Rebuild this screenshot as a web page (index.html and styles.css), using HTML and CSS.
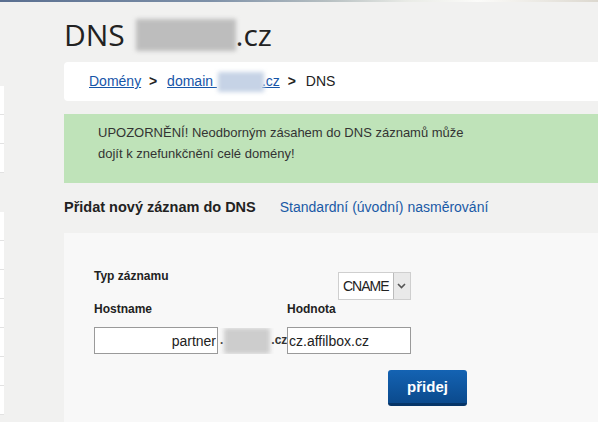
FILE: index.html
```html
<!DOCTYPE html>
<html>
  <head>
    <title>DNS</title>
    <link rel="stylesheet" href="styles.css">
  </head>
  <body>
    <div class="topbar"></div>
    <div class="page">
      <div class="side">
        <div class="cell"></div>
        <div class="cell"></div>
        <div class="cell"></div>
        <div class="side-gap"></div>
        <div class="cell"></div>
        <div class="cell"></div>
        <div class="cell"></div>
        <div class="cell"></div>
        <div class="cell"></div>
        <div class="cell"></div>
        <div class="cell"></div>
      </div>
      <div class="main">
        <h1 class="title">DNS <span class="blur blur-title"></span>.cz</h1>
        <div class="crumbs">
          <a href="#">Domény</a>
          <span class="sep">&gt;</span>
          <a href="#">domain <span class="blur blur-crumb"></span>.cz</a>
          <span class="sep">&gt;</span>
          <span>DNS</span>
        </div>
        <div class="alert">
          <p>UPOZORNĚNÍ! Neodborným zásahem do DNS záznamů může dojít k znefunkčnění celé domény!</p>
        </div>
        <div class="tabs">
          <strong>Přidat nový záznam do DNS</strong>
          <a href="#">Standardní (úvodní) nasměrování</a>
        </div>
        <div class="panel">
          <div class="row type-row">
            <label class="lbl">Typ záznamu</label>
            <div class="select">
              <span class="select-val">CNAME</span>
              <span class="select-btn">
                <svg width="9" height="6" viewBox="0 0 9 6"><path d="M1 1 L4.5 4.5 L8 1" fill="none" stroke="#555" stroke-width="1.6"/></svg>
              </span>
            </div>
          </div>
          <div class="row labels">
            <label class="lbl col1">Hostname</label>
            <label class="lbl">Hodnota</label>
          </div>
          <div class="row inputs">
            <input class="field host" type="text" value="partner">
            <span class="suffix">.<span class="blur blur-host"></span>.cz</span>
            <input class="field" type="text" value="cz.affilbox.cz">
          </div>
          <div class="row actions">
            <button class="btn">přidej</button>
          </div>
        </div>
      </div>
    </div>
  </body>
</html>
```

FILE: styles.css
```css
body {
    margin: 0;
    padding: 0;
    background: #f1f1f0;
    font-family: "Liberation Sans", Arial, sans-serif;
    color: #333;
    overflow: hidden;
}
a {
    color: #1655a8;
}
.topbar {
    height: 2px;
    background: linear-gradient(to right, #5a6f90 0%, #7d90a8 35%, #b7c0c2 55%, #e9ebe6 68%, #fbfbf9 80%, #dcd8cf 100%);
}
.page {
    display: flex;
    height: 420px;
    overflow: hidden;
}
.side {
    width: 4px;
    padding-top: 84px;
}
.side .cell {
    height: 28px;
    background: #fff;
    border-bottom: 1px solid #e2e2e2;
}
.side-gap {
    height: 39px;
}
.main {
    flex: 1;
    margin-left: 60px;
}
.title {
    margin: 0;
    height: 60px;
    line-height: 66px;
    font-family: "Open Sans", sans-serif;
    font-weight: normal;
    font-size: 30px;
    color: #222;
    white-space: nowrap;
}
.blur {
    display: inline-block;
    filter: blur(2px);
    vertical-align: middle;
}
.blur-title {
    width: 100px;
    height: 32px;
    background: #bdbdbd;
    margin: -6px 0 0 3px;
}
.blur-crumb {
    width: 46px;
    height: 20px;
    background: #c6d3e6;
    margin: 0 -2px 0 1px;
}
.blur-host {
    width: 46px;
    height: 26px;
    background: #cdcdcd;
    margin: 0 1px;
}
.crumbs {
    background: #fff;
    border-radius: 4px 0 0 4px;
    height: 39px;
    line-height: 39px;
    padding-left: 25px;
    font-size: 14px;
    color: #222;
    white-space: nowrap;
}
.crumbs .sep {
    margin: 0 6px 0 4px;
    font-weight: bold;
}
.alert {
    margin-top: 13px;
    background: #bfe3b9;
    height: 69px;
    padding: 8px 34px 0;
    box-sizing: border-box;
}
.alert p {
    margin: 0;
    width: 385px;
    font-size: 13px;
    line-height: 21px;
    color: #333;
}
.tabs {
    display: flex;
    gap: 24px;
    height: 50px;
    line-height: 48px;
    font-size: 14px;
    white-space: nowrap;
}
.tabs strong {
    color: #222;
    font-size: 14.5px;
}
.tabs a {
    text-decoration: none;
    color: #1a5aa6;
}
.panel {
    background: #f8f8f8;
    padding: 35px 0 0 30px;
    height: 200px;
    font-size: 12px;
}
.row {
    display: flex;
    align-items: flex-start;
}
.lbl {
    font-weight: bold;
    color: #222;
    font-size: 12px;
}
.type-row .lbl {
    padding-top: 1px;
    width: 244px;
}
.select {
    display: flex;
    height: 28px;
    border: 1px solid #cfcfcf;
    background: #fff;
    box-sizing: border-box;
    margin-top: 4px;
}
.select-val {
    padding: 0 4px 0 4px;
    line-height: 26px;
    font-size: 14px;
    letter-spacing: -1px;
    color: #222;
}
.select-btn {
    width: 16px;
    background: #e9e9e9;
    border-left: 1px solid #bbb;
    display: flex;
    align-items: center;
    justify-content: center;
}
.row .col1 {
    width: 193px;
}
.labels {
    margin-top: 2px;
}
.inputs {
    margin-top: 11px;
    align-items: center;
}
.field {
    width: 124px;
    height: 27px;
    box-sizing: border-box;
    border: 1px solid #9a9a9a;
    padding: 0 1px;
    font-family: "Liberation Sans", Arial, sans-serif;
    font-size: 14px;
    color: #222;
    background: #fff;
    margin: 0;
}
.field.host {
    text-align: right;
}
.suffix {
    width: 69px;
    font-weight: bold;
    font-size: 12px;
    color: #333;
    white-space: nowrap;
    overflow: hidden;
    padding-left: 2px;
    box-sizing: border-box;
}
.actions {
    margin-top: 16px;
    padding-left: 294px;
}
.btn {
    width: 79px;
    height: 36px;
    border: 0;
    border-bottom: 3px solid #063568;
    border-radius: 3px;
    background: linear-gradient(#1463b3, #0b4a8d);
    color: #fff;
    font-family: "Liberation Sans", Arial, sans-serif;
    font-weight: bold;
    font-size: 15px;
    padding: 0;
}
```
